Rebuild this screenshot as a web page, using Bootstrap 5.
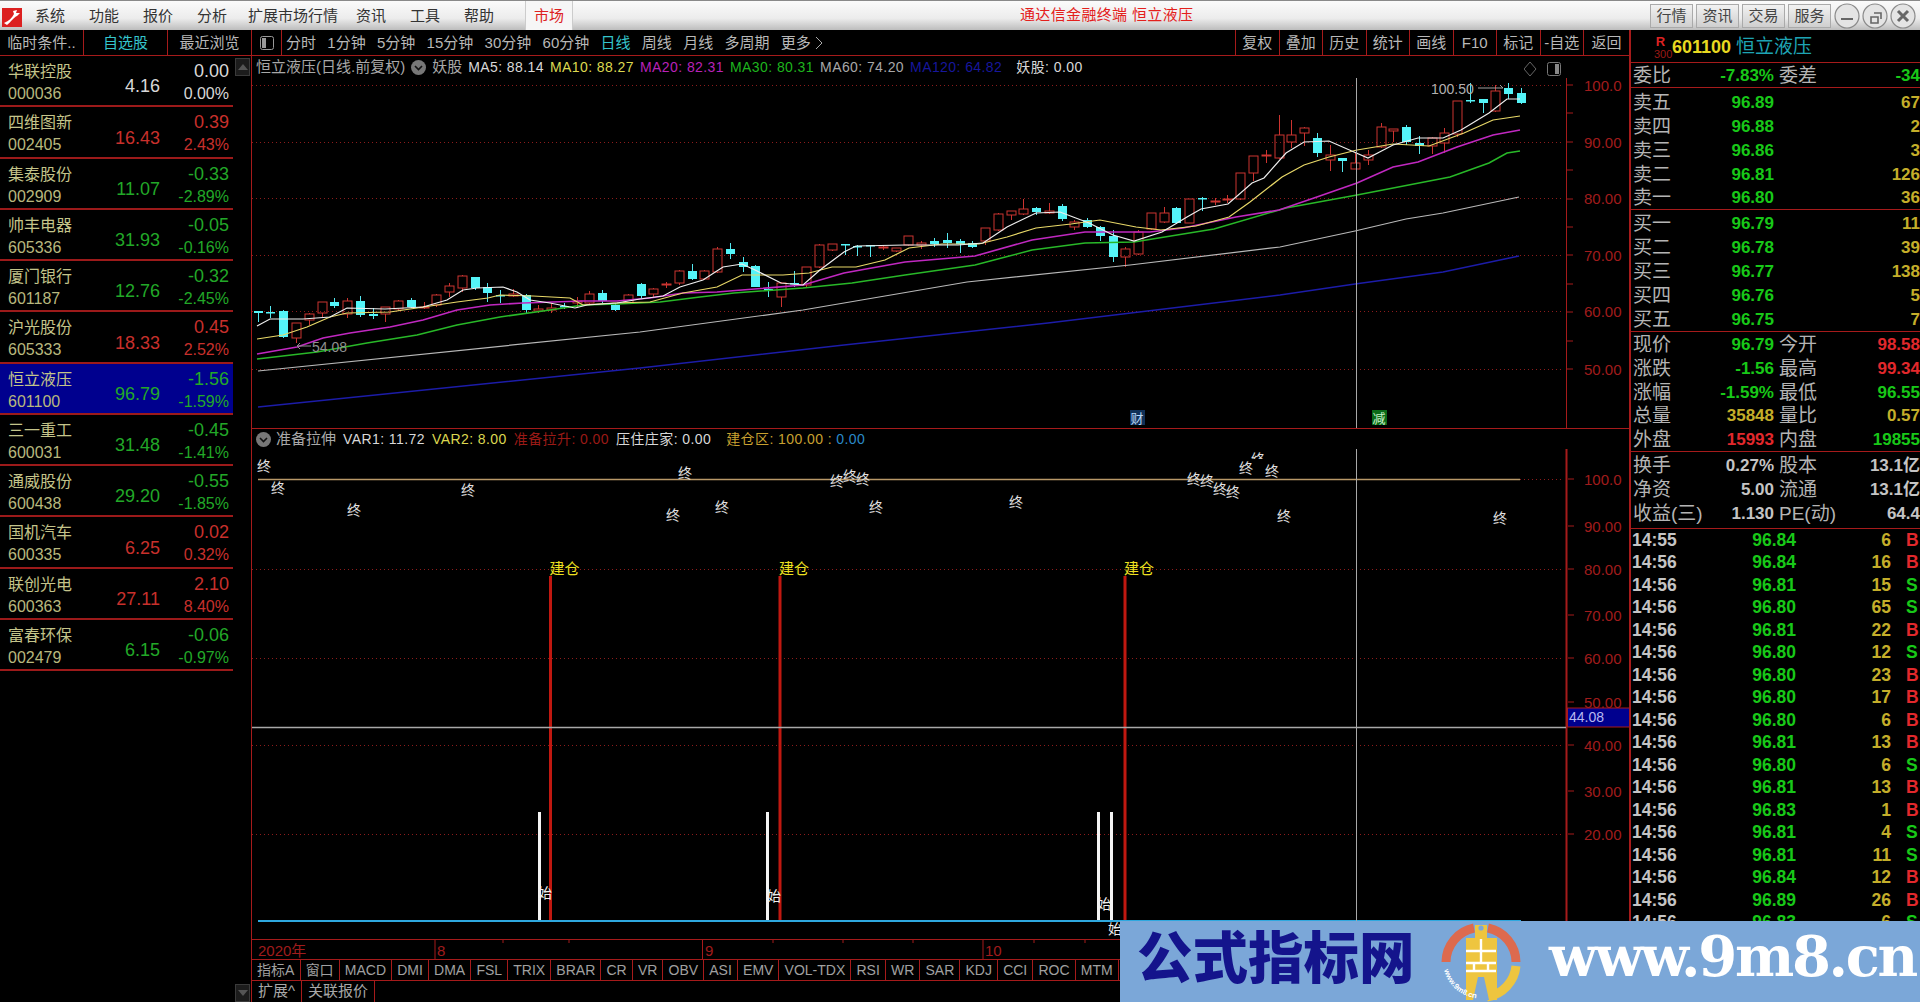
<!DOCTYPE html>
<html lang="zh-CN">
<head>
    <title>通达信金融终端 恒立液压</title>
    <meta charset="UTF-8">
    <link href="https://cdn.jsdelivr.net/npm/bootstrap@5.3.0/dist/css/bootstrap.min.css" rel="stylesheet">
    <style>
        html, body { height: 100%; }
        body { background: #000; color: #b8b8b8; overflow: hidden; font-family: "Liberation Sans", "Noto Sans CJK SC", sans-serif; font-size: 15px; line-height: 1.2; position: relative; }
        svg { display: block; }
        svg text { font-family: "Liberation Sans", "Noto Sans CJK SC", sans-serif; }

        .titlebar { height: 30px; background: linear-gradient(#fbfbfb, #ececec 60%, #bdbdbd); border-top: 1px solid #8a8a8a; color: #333; }
        .app-logo { margin: 4px 0 0 2px; }
        .menu { margin-left: 13px; gap: 24px; }
        .menu-long { margin: 0 -6px 0 -3px; }
        .market-tab { width: 48px; height: 29px; margin-left: 31px; background: #f6f6f6; border: 1px solid #ccc; border-width: 0 1px; color: #d22; }
        .app-title { position: absolute; left: 1020px; top: 6px; color: #e4201c; letter-spacing: .35px; }
        .win-tools { margin-left: auto; margin-right: 2px; gap: 3px; }
        .win-btn { width: 43px; height: 24px; padding: 0; border: 1px solid #aaa; border-radius: 0; background: linear-gradient(#f2f2f2, #cfcfcf); color: #444; font-size: 15px; line-height: 22px; }

        .toolbar { height: 26px; border-bottom: 1px solid #a61b1b; }
        .side-tab { width: 84px; border-right: 1px solid #a61b1b; }
        .panel-btn { width: 30px; border-right: 1px solid #a61b1b; }
        .periods { gap: 11.3px; padding-left: 4px; }
        .tool-btn { width: 43.5px; border-left: 1px solid #a61b1b; }
        .on { color: #35c4cc; }

        .sidebar { width: 252px; border-right: 1px solid #a61b1b; }
        .stock-list { width: 233px; border-radius: 0; }
        .stock { height: 51.25px; padding: 0 4px 0 8px; border-bottom: 2px solid #9c1a1a; }
        .stock.active-stock { background: #00008e; }
        .stock-name { font-size: 16px; color: #c4c48a; line-height: 19px; margin-top: 6px; }
        .stock-code { font-size: 16px; color: #b8b87e; line-height: 19px; margin-top: 3px; }
        .stock-price { font-size: 18px; margin-top: 13px; width: 80px; text-align: right; }
        .stock-chg { width: 69px; text-align: right; }
        .stock-chg .c1 { font-size: 18px; line-height: 21px; margin-top: 5px; }
        .stock-chg .c2 { font-size: 16px; line-height: 19px; margin-top: 2px; }
        .scroll-col { width: 18px; padding: 2px 1px 0 2px; }
        .scroll-btn { height: 18px; background: #1c1c1c; border: 1px solid #3a3a3a; }

        .up { color: #c8302c; }
        .down { color: #22a828; }
        .flat { color: #d8d8d8; }

        .chart-col { width: 1377px; }
        .chart-head { gap: 6px; padding-left: 4px; font-size: 14px; letter-spacing: .42px; white-space: nowrap; }
        .pane1-head { height: 22px; }
        .pane2-head { height: 20px; gap: 7px; }
        .pane2-head .ind-btn { margin-right: -2px; }
        .pane1 { border-bottom: 1px solid #a61b1b; }
        .ind-btn { flex: none; }
        .head-icons { margin: 3px 68px 0 auto; flex: none; }
        .zone-label { margin-left: 4px; }
        .c-white { color: #d8d8d8; } .c-yellow { color: #dcd850; } .c-pink { color: #b822b8; } .c-green { color: #1eb41e; }
        .c-gray { color: #a8a8a8; } .c-navy { color: #17179c; } .c-dred { color: #9a1a16; } .c-gold { color: #c8a030; } .c-blue { color: #2a8ac8; }
        .head-cn { font-size: 15px; letter-spacing: 0; }

        .ind-tabs { height: 22px; border-top: 1px solid #a61b1b; border-bottom: 1px solid #a61b1b; font-size: 14px; color: #a0a0a0; }
        .ind-tabs span { padding: 0 5.1px; border-right: 1px solid #a61b1b; white-space: nowrap; line-height: 20px; }
        .ext-tabs { height: 21px; }
        .ext-tabs span { padding: 0 6px; border-right: 1px solid #a61b1b; font-size: 15px; line-height: 20px; color: #a8a8a8; }

        .quote { width: 291px; border-left: 2px solid #a61b1b; overflow: hidden; font-weight: 700; font-size: 17px; }
        .quote-head { height: 33px; padding: 3px 0 0 23px; border-bottom: 1px solid #a61b1b; gap: 5px; }
        .r-mark { width: 13px; font-size: 13px; line-height: 12px; text-align: center; color: #d22; }
        .r-mark small { display: block; font-size: 11px; font-weight: 400; color: #9a1a16; }
        .q-code { color: #e8d820; font-size: 18px; }
        .q-name { color: #1ea4b4; font-size: 19px; font-weight: 400; }
        .q-block { border-bottom: 1px solid #a61b1b; }
        .q-block.sell { padding-top: 2px; }
        .q-block.buy { padding-top: 1px; }
        .q-block.info { padding: 1px 0 3px; }
        .q-row { height: 23.9px; padding-left: 2px; line-height: 26px; white-space: nowrap; }
        .q-label { width: 40px; font-size: 19px; font-weight: 400; color: #b4b4b4; flex: none; }
        .q-val { width: 101px; text-align: right; flex: none; }
        .q-val2 { margin-left: auto; text-align: right; }
        .q-gap { margin-left: 5px; }
        .green { color: #18c818; } .red { color: #e2282c; } .vol { color: #c4ae2a; } .plain { color: #c4c4c4; }
        .tick { height: 22.5px; line-height: 22.5px; padding-left: 1px; font-size: 17.5px; }
        .tick .t { width: 62px; color: #c4c4c4; flex: none; }
        .tick .p { width: 102px; text-align: right; flex: none; color: #18c818; }
        .tick .v { width: 95px; text-align: right; flex: none; color: #c4ae2a; }
        .tick .s { margin-left: 15px; }

        .watermark { position: absolute; right: 0; bottom: 0; width: 800px; height: 81px; background: #7ba7d8; }
        .wm-cn { margin: -4px 0 0 17px; width: 300px; flex: none; font-size: 55.5px; font-weight: 900; color: #14148c; line-height: 1; white-space: nowrap; }
        .wm-logo { margin-left: 4px; flex: none; }
        .wm-url { margin: -11px 0 0 28px; font-family: "DejaVu Serif", serif; font-weight: 700; font-size: 56px; letter-spacing: -2.3px; color: #fff; line-height: 1; white-space: nowrap; }
    </style>
</head>
<body class="d-flex flex-column">

<div class="titlebar d-flex align-items-center flex-shrink-0">
    <svg class="app-logo" width="20" height="19" viewBox="0 0 20 19"><rect width="20" height="19" fill="#dc2020"/><path d="M2 15 C7 13 10 10 12 6 L11 3 L15 2 L14 5 L18 5 L15 8 C12 9 9 14 5 17 Z" fill="#fff"/></svg>
    <div class="menu d-flex">
        <span>系统</span><span>功能</span><span>报价</span><span>分析</span><span class="menu-long">扩展市场行情</span><span>资讯</span><span>工具</span><span>帮助</span>
    </div>
    <div class="market-tab d-flex align-items-center justify-content-center">市场</div>
    <div class="app-title">通达信金融终端 恒立液压</div>
    <div class="win-tools d-flex align-items-center">
        <button class="btn win-btn">行情</button><button class="btn win-btn">资讯</button><button class="btn win-btn">交易</button><button class="btn win-btn">服务</button>
        <svg width="84" height="26" viewBox="0 0 84 26">
            <g fill="#e4e4e4" stroke="#8a8a8a" stroke-width="1.2"><circle cx="13" cy="13" r="12"/><circle cx="41" cy="13" r="12"/><circle cx="69" cy="13" r="12"/></g>
            <path d="M7 16h12" stroke="#666" stroke-width="2"/>
            <path d="M37 14h7v6h-7z M40 10h7v6" fill="none" stroke="#666" stroke-width="1.6"/>
            <path d="M64 8l10 10M74 8l-10 10" stroke="#666" stroke-width="3"/>
        </svg>
    </div>
</div>

<div class="d-flex flex-grow-1" style="min-height:0">
    <div class="d-flex flex-column">
        <div class="toolbar d-flex flex-shrink-0">
            <div class="side-tab d-flex align-items-center justify-content-center">临时条件..</div>
            <div class="side-tab d-flex align-items-center justify-content-center on">自选股</div>
            <div class="side-tab d-flex align-items-center justify-content-center">最近浏览</div>
            <div class="panel-btn d-flex align-items-center justify-content-center">
                <svg width="14" height="14" viewBox="0 0 14 14"><rect x=".5" y=".5" width="13" height="13" rx="2" fill="none" stroke="#999"/><rect x="2" y="2" width="4" height="10" fill="#999"/></svg>
            </div>
            <div class="periods d-flex align-items-center flex-grow-1">
                <span>分时</span><span>1分钟</span><span>5分钟</span><span>15分钟</span><span>30分钟</span><span>60分钟</span><span class="on">日线</span><span>周线</span><span>月线</span><span>多周期</span>
                <span class="d-flex align-items-center gap-1">更多<svg width="8" height="14" viewBox="0 0 8 14"><path d="M1 1l6 6-6 6" fill="none" stroke="#aaa"/></svg></span>
            </div>
            <div class="tool-btn d-flex align-items-center justify-content-center">复权</div>
            <div class="tool-btn d-flex align-items-center justify-content-center">叠加</div>
            <div class="tool-btn d-flex align-items-center justify-content-center">历史</div>
            <div class="tool-btn d-flex align-items-center justify-content-center">统计</div>
            <div class="tool-btn d-flex align-items-center justify-content-center">画线</div>
            <div class="tool-btn d-flex align-items-center justify-content-center">F10</div>
            <div class="tool-btn d-flex align-items-center justify-content-center">标记</div>
            <div class="tool-btn d-flex align-items-center justify-content-center">-自选</div>
            <div class="tool-btn d-flex align-items-center justify-content-center" style="width:46px">返回</div>
        </div>

        <div class="d-flex flex-grow-1" style="min-height:0">
            <div class="sidebar d-flex flex-shrink-0">
                <div class="stock-list list-group" id="stockList"></div>
                <div class="scroll-col d-flex flex-column justify-content-between">
                    <div class="scroll-btn d-flex align-items-center justify-content-center"><svg width="10" height="6"><path d="M0 6L5 0L10 6Z" fill="#555"/></svg></div>
                    <div class="scroll-btn d-flex align-items-center justify-content-center"><svg width="10" height="6"><path d="M0 0L5 6L10 0Z" fill="#555"/></svg></div>
                </div>
            </div>

            <div class="chart-col d-flex flex-column">
                <div class="pane1">
                    <div class="chart-head pane1-head d-flex align-items-center">
                        <span class="c-gray head-cn">恒立液压(日线.前复权)</span>
                        <svg class="ind-btn" width="15" height="15" viewBox="0 0 15 15"><circle cx="7.5" cy="7.5" r="7.5" fill="#777"/><path d="M4 6l3.5 3.5L11 6" fill="none" stroke="#111" stroke-width="1.6"/></svg>
                        <span class="c-gray head-cn">妖股</span>
                        <span class="c-white">MA5: 88.14</span>
                        <span class="c-yellow">MA10: 88.27</span>
                        <span class="c-pink">MA20: 82.31</span>
                        <span class="c-green">MA30: 80.31</span>
                        <span class="c-gray">MA60: 74.20</span>
                        <span class="c-navy">MA120: 64.82</span>
                        <span class="c-white ms-2">妖股: 0.00</span>
                        <svg class="head-icons" width="37" height="14" viewBox="0 0 37 14">
                            <path d="M6 0l6 7-6 7-6-7z" fill="none" stroke="#666"/>
                            <rect x="23.5" y=".5" width="13" height="13" rx="2" fill="none" stroke="#777"/><rect x="31" y="2" width="4" height="10" fill="#888"/>
                        </svg>
                    </div>
                    <svg id="mainChart" width="1377" height="350" viewBox="252 78 1377 350"></svg>
                </div>
                <div>
                    <div class="chart-head pane2-head d-flex align-items-center">
                        <svg class="ind-btn" width="15" height="15" viewBox="0 0 15 15"><circle cx="7.5" cy="7.5" r="7.5" fill="#777"/><path d="M4 6l3.5 3.5L11 6" fill="none" stroke="#111" stroke-width="1.6"/></svg>
                        <span class="c-gray head-cn">准备拉伸</span>
                        <span class="c-white">VAR1: 11.72</span>
                        <span class="c-yellow">VAR2: 8.00</span>
                        <span class="c-dred">准备拉升: 0.00</span>
                        <span class="c-white">压住庄家: 0.00</span>
                        <span class="zone-label ms-2"><span class="c-gold">建仓区: 100.00 :</span> <span class="c-blue">0.00</span></span>
                    </div>
                    <svg id="subChart" width="1377" height="490" viewBox="252 449 1377 490"></svg>
                </div>
                <svg id="timeAxis" width="1377" height="20" viewBox="252 939 1377 20"></svg>
                <div class="ind-tabs d-flex" id="indTabs"></div>
                <div class="ext-tabs d-flex"><span>扩展^</span><span>关联报价</span></div>
            </div>
        </div>
    </div>

    <div class="quote flex-shrink-0">
        <div class="quote-head d-flex align-items-center">
            <div class="r-mark">R<small>300</small></div>
            <span class="q-code">601100</span>
            <span class="q-name">恒立液压</span>
        </div>
        <div id="quoteBlocks"></div>
        <div id="ticks"></div>
    </div>
</div>

<div class="watermark d-flex align-items-center">
    <div class="wm-cn">公式指标网</div>
    <svg class="wm-logo" width="80" height="80" viewBox="0 0 80 80">
        <path id="ringLow" d="M3 48 A38 38 0 0 0 34 76" fill="none"/>
        <path d="M5 40 A35 35 0 0 1 33 6 M47 6 A35 35 0 0 1 75 40" fill="none" stroke="#dd6a4e" stroke-width="9"/>
        <path d="M75 44 A35 35 0 0 1 46 75" fill="none" stroke="#eec53f" stroke-width="9"/>
        <path d="M34 3h12v13h10v62H25V16h9z" fill="#eec53f"/>
        <circle cx="40" cy="6" r="2.6" fill="#7ba7d8"/>
        <path d="M25 29h30M40 17v24M25 41h30M25 49h30M33 41v8M47 41v8" stroke="#fff" stroke-width="2.4" fill="none"/>
        <path d="M32 78L37 55h6l5 23z" fill="#7ba7d8"/>
        <text font-size="7.5" fill="#fff" font-weight="700"><textPath href="#ringLow">www.9m8.cn</textPath></text>
    </svg>
    <div class="wm-url">www.9m8.cn</div>
</div>

<script>
    // 自选股列表
    const stocks = [
        ["华联控股","000036","4.16","0.00","0.00%","flat"],
        ["四维图新","002405","16.43","0.39","2.43%","up"],
        ["集泰股份","002909","11.07","-0.33","-2.89%","down"],
        ["帅丰电器","605336","31.93","-0.05","-0.16%","down"],
        ["厦门银行","601187","12.76","-0.32","-2.45%","down"],
        ["沪光股份","605333","18.33","0.45","2.52%","up"],
        ["恒立液压","601100","96.79","-1.56","-1.59%","down"],
        ["三一重工","600031","31.48","-0.45","-1.41%","down"],
        ["通威股份","600438","29.20","-0.55","-1.85%","down"],
        ["国机汽车","600335","6.25","0.02","0.32%","up"],
        ["联创光电","600363","27.11","2.10","8.40%","up"],
        ["富春环保","002479","6.15","-0.06","-0.97%","down"]
    ];
    document.getElementById("stockList").innerHTML = stocks.map((s, i) => `
        <div class="stock d-flex ${i === 6 ? "active-stock" : ""}">
            <div class="flex-shrink-0" style="width:72px">
                <div class="stock-name">${s[0]}</div><div class="stock-code">${s[1]}</div>
            </div>
            <div class="stock-price align-self-center ${s[5]}">${s[2]}</div>
            <div class="stock-chg ${s[5]}"><div class="c1">${s[3]}</div><div class="c2">${s[4]}</div></div>
        </div>`).join("");

    // 五档和行情
    const quoteRows = [
        ["", [["委比","-7.83%","green","委差","-34","green"]]],
        ["sell", [["卖五","96.89","green","","67","vol"],["卖四","96.88","green","","2","vol"],["卖三","96.86","green","","3","vol"],["卖二","96.81","green","","126","vol"],["卖一","96.80","green","","36","vol"]]],
        ["buy", [["买一","96.79","green","","11","vol"],["买二","96.78","green","","39","vol"],["买三","96.77","green","","138","vol"],["买四","96.76","green","","5","vol"],["买五","96.75","green","","7","vol"]]],
        ["", [["现价","96.79","green","今开","98.58","red"],["涨跌","-1.56","green","最高","99.34","red"],["涨幅","-1.59%","green","最低","96.55","green"],["总量","35848","vol","量比","0.57","vol"],["外盘","15993","red","内盘","19855","green"]]],
        ["info", [["换手","0.27%","plain","股本","13.1亿","plain"],["净资","5.00","plain","流通","13.1亿","plain"],["收益(三)","1.130","plain","PE(动)","64.4","plain"]]]
    ];
    document.getElementById("quoteBlocks").innerHTML = quoteRows.map(block =>
        `<div class="q-block ${block[0]}">` + block[1].map(r => `
            <div class="q-row d-flex">
                <span class="q-label">${r[0]}</span><span class="q-val ${r[2]}">${r[1]}</span>
                <span class="q-label q-gap">${r[3]}</span><span class="q-val2 ${r[5]}">${r[4]}</span>
            </div>`).join("") + `</div>`).join("");

    // 分笔成交
    const ticks = [["14:55","96.84",6,"B"],["14:56","96.84",16,"B"],["14:56","96.81",15,"S"],["14:56","96.80",65,"S"],["14:56","96.81",22,"B"],["14:56","96.80",12,"S"],["14:56","96.80",23,"B"],["14:56","96.80",17,"B"],["14:56","96.80",6,"B"],["14:56","96.81",13,"B"],["14:56","96.80",6,"S"],["14:56","96.81",13,"B"],["14:56","96.83",1,"B"],["14:56","96.81",4,"S"],["14:56","96.81",11,"S"],["14:56","96.84",12,"B"],["14:56","96.89",26,"B"],["14:56","96.83",6,"S"]];
    document.getElementById("ticks").innerHTML = ticks.map(t => `
        <div class="tick d-flex"><span class="t">${t[0]}</span><span class="p">${t[1]}</span><span class="v">${t[2]}</span><span class="s ${t[3] === "B" ? "red" : "green"}">${t[3]}</span></div>`).join("");

    document.getElementById("indTabs").innerHTML = ["指标A","窗口","MACD","DMI","DMA","FSL","TRIX","BRAR","CR","VR","OBV","ASI","EMV","VOL-TDX","RSI","WR","SAR","KDJ","CCI","ROC","MTM"].map(t => `<span>${t}</span>`).join("");

    const RED = "#a61b1b", DOT = "#8c1c1c", LABEL = "#a01c1c";
    const text = (x, y, s, fill, size, extra = "") => `<text x="${x}" y="${y}" fill="${fill}" font-size="${size}" dominant-baseline="central" ${extra}>${s}</text>`;
    const dotted = (y, x1 = 252, x2 = 1562) => `<path d="M${x1} ${y}H${x2}" stroke="${DOT}" stroke-dasharray="1 3"/>`;
    const line = (pts, color, w) => `<polyline fill="none" stroke="${color}" stroke-width="${w}" points="${pts.map(p => p.join(",")).join(" ")}"/>`;

    // K线: 类型 实体上 实体下 影线上 影线下
    const candles = "c311,313,311,322 c312,313,306,318 c311,337,310,338 r323,338,323,343 r314,320,313,325 r302,313,302,317 c302,306,298,308 r301,314,298,318 c301,315,296,317 c314,316,308,319 r307,314,307,322 r301,309,300,311 c300,307,298,308 r307,308,302,309 r295,305,294,307 r286,292,283,297 r276,288,275,292 c277,288,277,290 c287,293,283,302 c295,296,290,303 r294,296,289,297 c295,310,294,314 r309,311,305,313 r308,310,303,313 c306,307,303,309 r301,303,297,308 r294,303,291,305 c293,301,290,303 c305,310,303,311 r295,303,294,304 c284,296,283,298 r289,294,288,298 r284,285,282,288 r271,283,270,285 c271,279,264,280 r271,279,270,280 r249,272,247,273 c249,254,243,259 c262,267,257,272 c266,287,265,287 c289,290,282,297 r283,297,282,307 c283,284,271,287 r267,285,267,287 r245,267,244,268 r244,250,244,251 c244,245,244,255 c246,247,245,256 c245,246,245,257 r247,248,245,250 r248,251,248,252 r236,245,236,246 r243,245,241,249 c241,244,238,247 c240,243,233,248 c241,244,239,253 c243,247,241,248 r228,241,228,245 r214,230,213,231 r211,215,211,220 r209,214,199,215 c208,212,207,215 r211,213,203,214 c206,219,204,221 r222,227,220,230 c220,227,218,228 c227,236,226,241 c236,257,230,262 r249,257,247,267 r232,254,230,255 r213,229,213,230 r213,222,207,223 c208,223,207,224 r199,223,199,223 c198,199,197,211 r201,202,198,205 r199,200,195,203 r173,199,173,200 r156,173,156,181 r155,156,150,163 r135,158,115,159 r135,142,120,148 r128,133,127,146 c138,153,133,157 r155,160,145,171 c158,161,158,172 r163,169,153,169 r155,160,150,165 r127,147,123,148 r129,131,129,142 c127,142,125,145 c143,146,136,154 r138,146,137,154 r133,143,128,153 r101,134,101,137 c100,101,83,103 c99,103,99,113 r91,111,85,112 c88,94,83,99 c93,103,88,104".split(" ");

    const ma5 = [[257,326],[270,319],[303,319],[330,317],[347,308],[385,309],[423,307],[447,300],[463,290],[477,288],[503,287],[517,292],[530,300],[550,303],[575,308],[587,305],[617,303],[640,299],[663,296],[680,287],[703,280],[723,267],[742,264],[755,270],[781,283],[803,285],[820,270],[844,252],[856,246],[905,245],[958,245],[983,243],[1007,227],[1036,213],[1060,212],[1089,223],[1113,235],[1134,241],[1162,232],[1187,217],[1201,209],[1228,204],[1252,183],[1264,178],[1286,153],[1304,142],[1329,141],[1354,152],[1368,158],[1393,145],[1418,138],[1443,138],[1461,130],[1489,113],[1507,99],[1520,99]];
    const ma10 = [[257,339],[283,335],[307,327],[330,317],[347,313],[390,312],[417,308],[457,302],[488,298],[500,295],[533,296],[570,298],[583,305],[613,303],[650,302],[683,293],[717,287],[742,275],[783,275],[809,273],[832,267],[856,267],[885,260],[909,248],[942,244],[979,244],[1007,237],[1036,228],[1071,224],[1100,220],[1136,227],[1161,230],[1196,226],[1229,217],[1250,202],[1282,177],[1304,165],[1329,157],[1357,150],[1393,144],[1429,146],[1464,133],[1493,120],[1520,116]];
    const ma20 = [[257,354],[297,347],[323,338],[350,333],[390,327],[423,320],[457,310],[490,305],[523,303],[583,301],[617,301],[650,298],[683,293],[717,292],[742,290],[803,285],[844,273],[905,262],[975,256],[1032,240],[1085,232],[1150,232],[1183,228],[1236,217],[1279,210],[1314,198],[1357,183],[1393,167],[1418,162],[1457,147],[1493,135],[1520,130]];
    const ma30 = [[257,359],[317,352],[367,343],[417,335],[457,325],[500,317],[550,310],[583,305],[617,304],[660,302],[700,297],[734,293],[803,288],[852,283],[905,275],[975,265],[1032,250],[1085,243],[1134,242],[1214,229],[1286,208],[1357,195],[1450,177],[1489,163],[1507,153],[1520,151]];
    const ma60 = [[258,371],[640,332],[803,310],[967,282],[1130,265],[1280,247],[1355,231],[1406,219],[1443,213],[1519,197]];
    const ma120 = [[258,407],[640,368],[844,345],[1048,323],[1280,295],[1355,284],[1443,272],[1519,256]];

    function drawCandles() {
        return candles.map((c, i) => {
            const x = Math.round(257.7 + 12.76 * i) + .5;
            const [top, bot, wt, wb] = c.slice(1).split(",").map(Number);
            const w = 4.5;
            if (c[0] === "c") {
                return `<path d="M${x} ${wt}V${wb}" stroke="#54e8f0"/><rect x="${x - w}" y="${top}" width="${w * 2}" height="${Math.max(bot - top, 1.5)}" fill="#54f4f8"/>`;
            }
            return `<path d="M${x} ${wt}V${top}M${x} ${bot}V${wb}" stroke="#cc3430"/><rect x="${x - w}" y="${top}" width="${w * 2}" height="${Math.max(bot - top, 1)}" fill="none" stroke="#cc3430"/>`;
        }).join("");
    }

    // 主图
    const mainLabels = [[85,"100.0"],[142,"90.00"],[198,"80.00"],[255,"70.00"],[311,"60.00"],[369,"50.00"]];
    let main = mainLabels.map(l => dotted(l[0] + .5)).join("");
    main += `<path d="M1566.5 78V428" stroke="${RED}"/>`;
    for (let i = 0; i <= 10; i++) {
        const y = Math.round(85 + i * 28.4);
        main += `<path d="M1567 ${y}h6" stroke="${RED}"/>`;
    }
    main += mainLabels.map(l => text(1584, l[0], l[1], LABEL, 15)).join("");
    main += drawCandles();
    main += line(ma120, "#1c1ca8", 1.5) + line(ma60, "#b8b8b8", 1.2) + line(ma30, "#28b828", 1.5) + line(ma20, "#c028c0", 1.6) + line(ma10, "#e8d868", 1.2) + line(ma5, "#eeeeee", 1.2);
    main += `<path d="M1356.5 78V428" stroke="#a8a8a8"/>`;
    main += text(312, 347, "54.08", "#909090", 14) + `<path d="M311 346H297l3-3M297 346l3 3" fill="none" stroke="#909090"/>`;
    main += text(1431, 89, "100.50", "#b0b0b0", 14) + `<path d="M1478 88H1503l-3-3" fill="none" stroke="#a0a0a0"/>`;
    main += `<rect x="1130" y="410" width="15" height="15" fill="#103058"/>` + text(1137, 418, "财", "#b8d8f8", 13, 'text-anchor="middle"');
    main += `<rect x="1372" y="410" width="15" height="15" fill="#0a6a18"/>` + text(1379, 418, "减", "#c8f0c8", 13, 'text-anchor="middle"');
    document.getElementById("mainChart").innerHTML = main;

    // 副图
    const subLabels = [[479,"100.0"],[526,"90.00"],[569,"80.00"],[615,"70.00"],[658,"60.00"],[702,"50.00"],[745,"40.00"],[791,"30.00"],[834,"20.00"]];
    let sub = [569, 658, 745, 834].map(y => dotted(y + .5)).join("") + dotted(479.5, 1520);
    sub += `<path d="M258 479.5H1520" stroke="#b89868" stroke-width="1.5"/>`;
    sub += `<path d="M1566.5 449V939" stroke="${RED}" stroke-width="2"/>`;
    sub += subLabels.map(l => `<path d="M1568 ${l[0]}h6" stroke="${RED}"/>` + text(1584, l[0], l[1], LABEL, 15)).join("");
    const ends = [[264,466],[278,488],[354,510],[468,490],[685,473],[673,515],[722,507],[837,481],[850,476],[863,479],[876,507],[1016,502],[1194,479],[1207,481],[1220,489],[1233,492],[1246,468],[1272,471],[1284,516],[1500,518]];
    sub += ends.map(e => text(e[0], e[1], "终", "#e0e0e0", 14, 'text-anchor="middle"')).join("");
    sub += `<clipPath id="endClip"><rect x="1250" y="449" width="20" height="10"/></clipPath>` + text(1258, 459, "终", "#e0e0e0", 14, 'text-anchor="middle" clip-path="url(#endClip)"');
    [539, 767, 1098, 1111].forEach(x => { sub += `<rect x="${x - 1}" y="812" width="3" height="109" fill="#f4f4f4"/>`; });
    [550.5, 780, 1125].forEach(x => {
        sub += `<rect x="${x - 1.5}" y="576" width="3" height="345" fill="#c01810"/>`;
        sub += text(x - 1, 568, "建仓", "#eee020", 15);
    });
    [[545,893],[774,896],[1104,904],[1115,929]].forEach(p => { sub += text(p[0], p[1], "始", "#f0f0f0", 14, 'text-anchor="middle"'); });
    sub += `<path d="M258 921H1521" stroke="#2ea8df" stroke-width="2"/>`;
    sub += `<path d="M252 727.5H1566" stroke="#a8a8a8" stroke-width="1.5"/><path d="M1356.5 449V939" stroke="#a8a8a8"/>`;
    sub += `<rect x="1567.5" y="708" width="62" height="19" fill="#00008e" stroke="${RED}"/>` + text(1569, 717, "44.08", "#b8b8f0", 14);
    document.getElementById("subChart").innerHTML = sub;

    // 时间轴
    let axis = `<path d="M1566.5 939V959" stroke="${RED}" stroke-width="2"/><path d="M252 939.5H1566" stroke="${RED}"/>`;
    [503, 569, 773, 843, 913, 1034, 1085].forEach(x => { axis += `<path d="M${x} 939v4" stroke="${RED}"/>`; });
    [435, 702.5, 983].forEach(x => { axis += `<path d="M${x} 939V959" stroke="${RED}"/>`; });
    axis += text(258, 950, "2020年", LABEL, 15) + text(437, 950, "8", LABEL, 15) + text(705, 950, "9", LABEL, 15) + text(985, 950, "10", LABEL, 15);
    document.getElementById("timeAxis").innerHTML = axis;
</script>
<script src="https://cdn.jsdelivr.net/npm/bootstrap@5.3.0/dist/js/bootstrap.bundle.min.js"></script>
</body>
</html>
